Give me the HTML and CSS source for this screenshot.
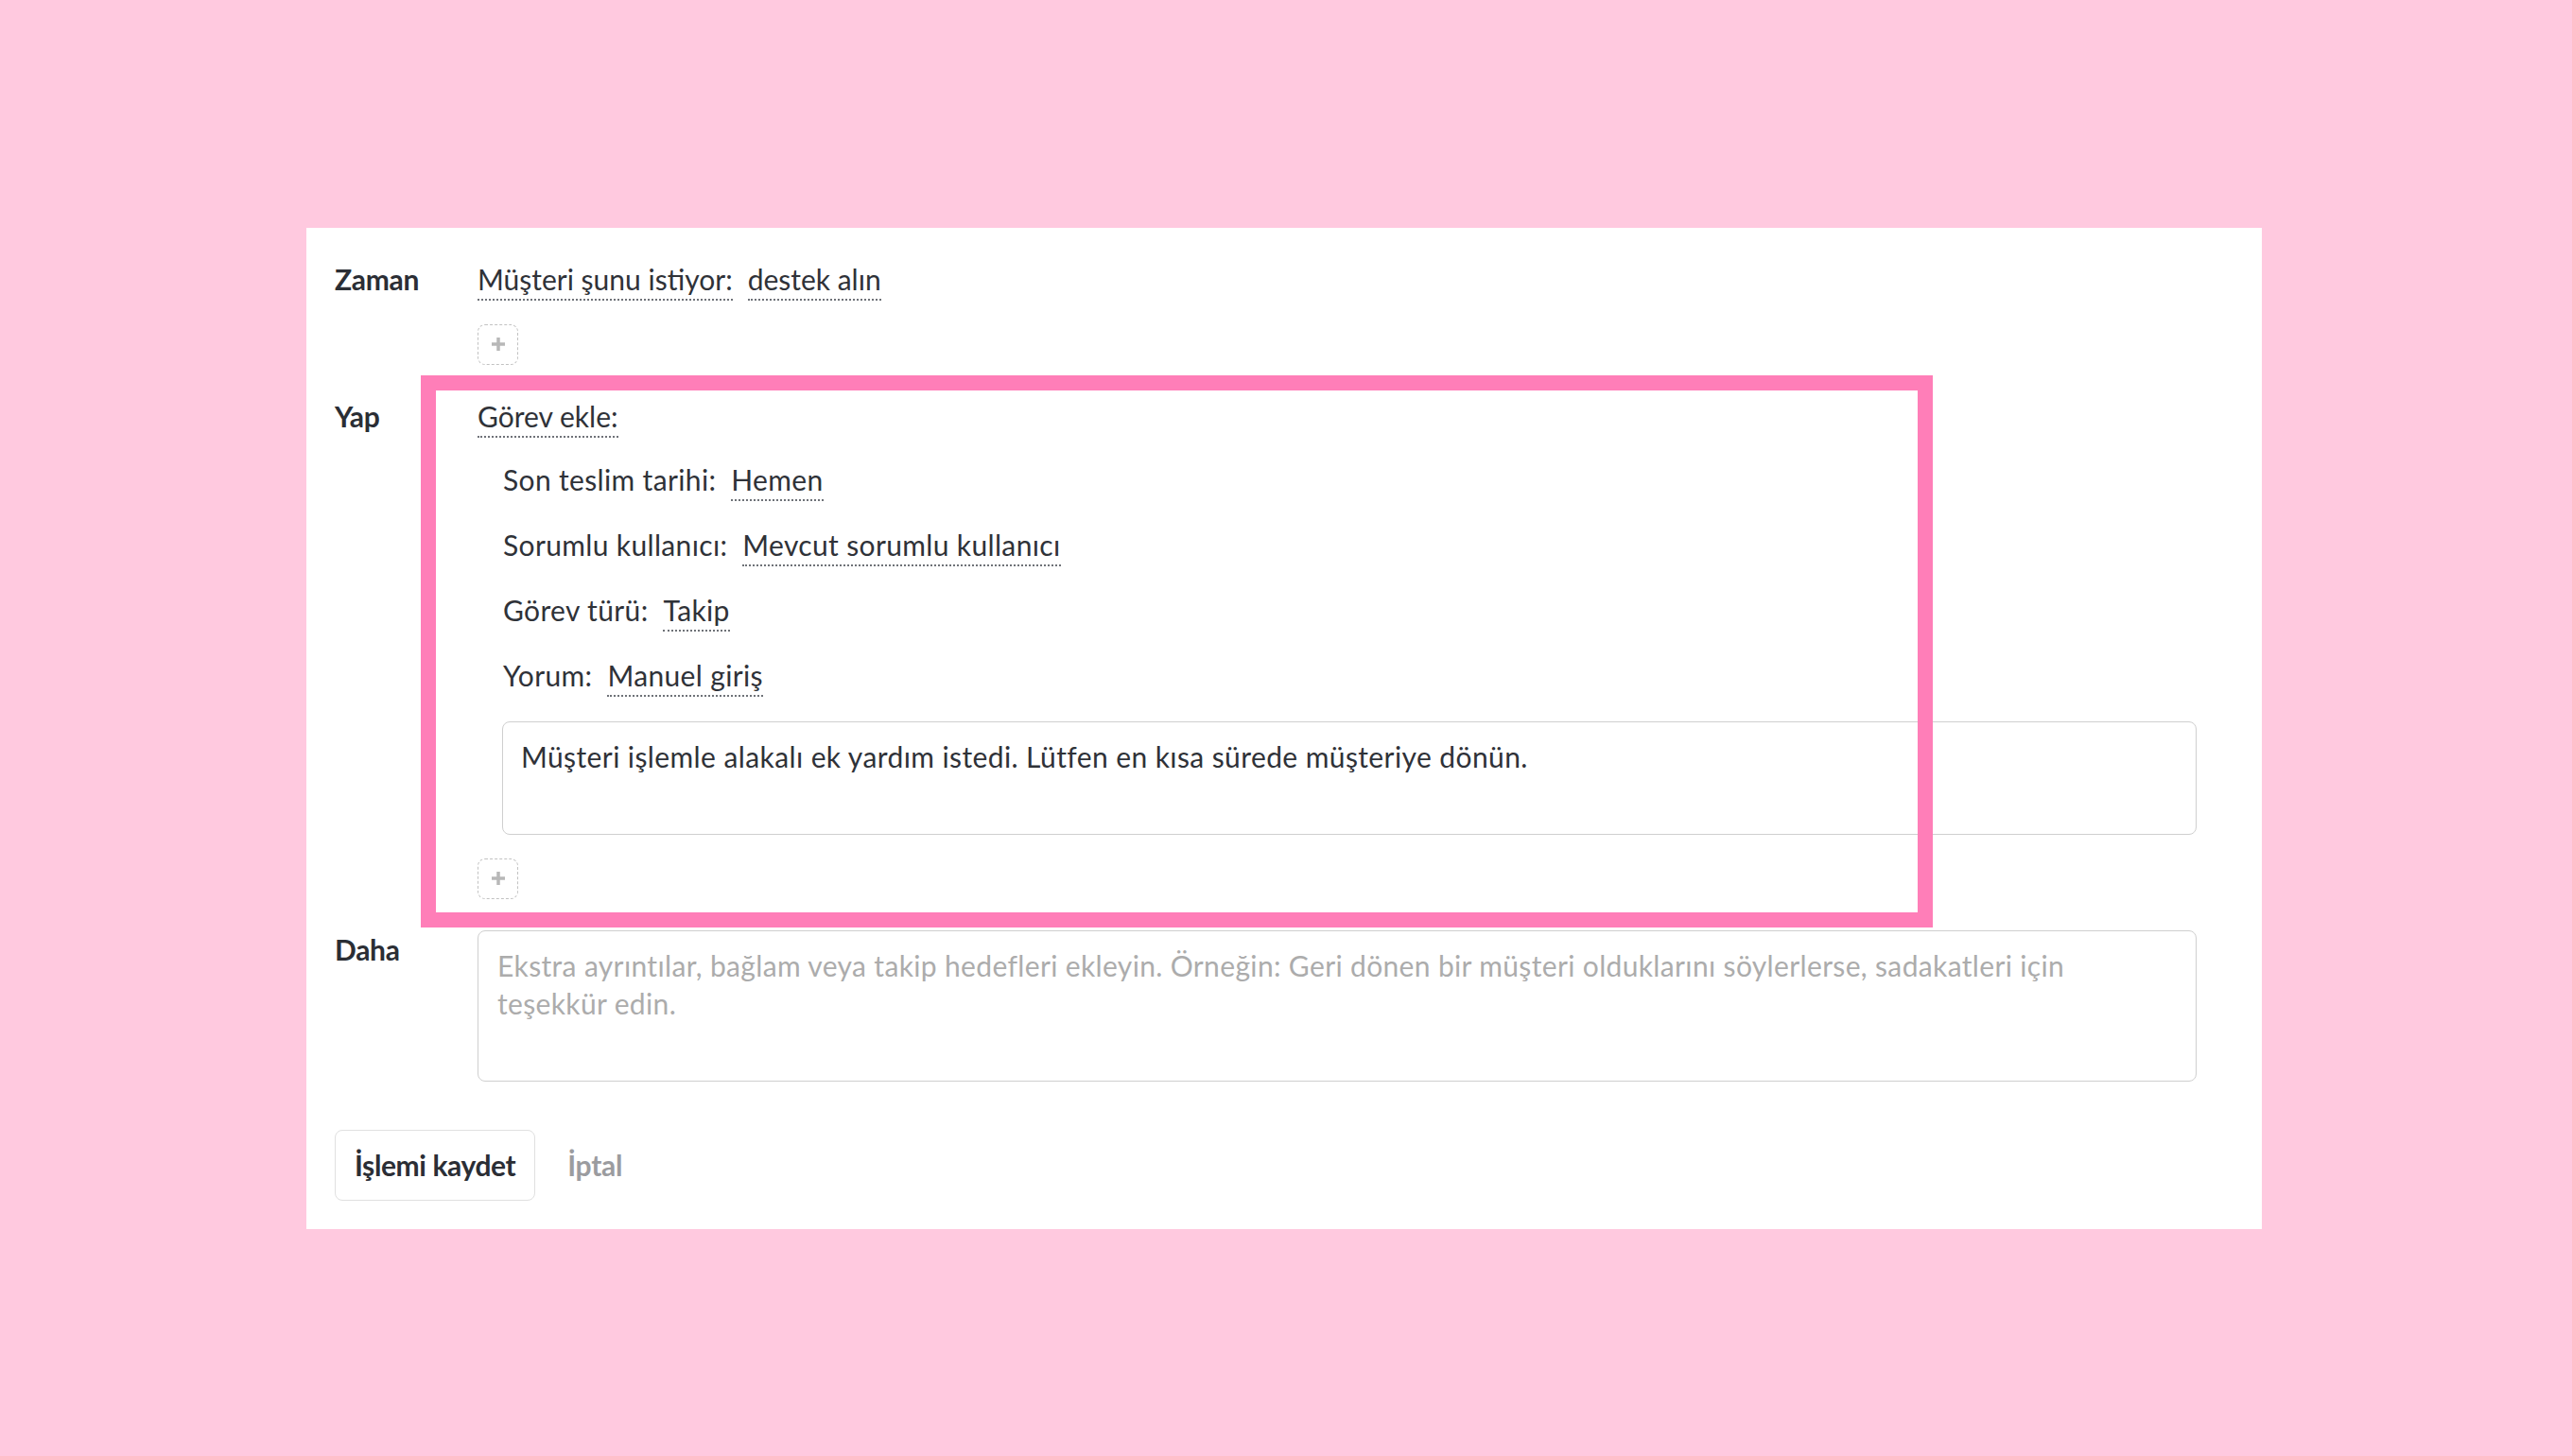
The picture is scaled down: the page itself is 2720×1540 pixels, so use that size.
FILE: index.html
```html
<!DOCTYPE html>
<html lang="tr">
<head>
<meta charset="utf-8">
<title>İşlem</title>
<link rel="stylesheet" href="styles.css">
</head>
<body>
<main class="card">
  <section class="row">
    <div class="label">Zaman</div>
    <div class="content">
      <div class="line"><span class="tok">Müşteri şunu istiyor:</span><span class="tok gap">destek alın</span></div>
      <button class="add" type="button" aria-label="Ekle"><svg viewBox="0 0 14 14" width="14" height="14"><path d="M7 0v14M0 7h14" stroke="#b8b8b8" stroke-width="3.5"/></svg></button>
    </div>
  </section>

  <section class="row row-do">
    <div class="label">Yap</div>
    <div class="content">
      <div class="line"><span class="tok">Görev ekle:</span></div>
      <div class="sub">
        <div class="line sub-line">Son teslim tarihi:<span class="tok gap">Hemen</span></div>
        <div class="line sub-line">Sorumlu kullanıcı:<span class="tok gap">Mevcut sorumlu kullanıcı</span></div>
        <div class="line sub-line">Görev türü:<span class="tok gap">Takip</span></div>
        <div class="line sub-line">Yorum:<span class="tok gap">Manuel giriş</span></div>
        <div class="field field-comment">Müşteri işlemle alakalı ek yardım istedi. Lütfen en kısa sürede müşteriye dönün.</div>
      </div>
      <button class="add add-task" type="button" aria-label="Ekle"><svg viewBox="0 0 14 14" width="14" height="14"><path d="M7 0v14M0 7h14" stroke="#b8b8b8" stroke-width="3.5"/></svg></button>
    </div>
  </section>

  <section class="row row-more">
    <div class="label">Daha</div>
    <div class="content">
      <div class="field field-more placeholder">Ekstra ayrıntılar, bağlam veya takip hedefleri ekleyin. Örneğin: Geri dönen bir müşteri olduklarını söylerlerse, sadakatleri için teşekkür edin.</div>
    </div>
  </section>

  <div class="actions">
    <button class="save" type="button">İşlemi kaydet</button>
    <button class="cancel" type="button">İptal</button>
  </div>

  <div class="highlight" aria-hidden="true"></div>
</main>
</body>
</html>
```
FILE: styles.css
```css
* { box-sizing: border-box; }

html, body { height: 100%; }

body {
  margin: 0;
  padding-right: 4px;
  background: #ffc9df;
  display: flex;
  align-items: center;
  justify-content: center;
  font-family: "Lato", "Liberation Sans", sans-serif;
  font-size: 30px;
  color: #2f3238;
}

.card {
  position: relative;
  width: 2068px;
  background: #ffffff;
  padding: 34px 69px 30px 30px;
}

.row {
  display: grid;
  grid-template-columns: 151px 1fr;
}

.row-do { margin-top: 34px; }
.row-more { margin-top: 33px; }

.label {
  font-weight: 700;
  line-height: 40px;
  color: #2b2e35;
  letter-spacing: -0.3px;
}

.content {
  display: flex;
  flex-direction: column;
  align-items: flex-start;
}

.line {
  height: 40px;
  line-height: 40px;
  white-space: nowrap;
}

.tok {
  padding-bottom: 3px;
  border-bottom: 2px dotted #6f7278;
}

.gap { margin-left: 16px; }

.sub {
  align-self: stretch;
  margin-left: 27px;
  display: flex;
  flex-direction: column;
  letter-spacing: 0.35px;
}

.sub-line { margin-top: 29px; }
.sub-line:first-child { margin-top: 27px; }

.field {
  border: 1px solid #cfcfcf;
  border-radius: 8px;
  line-height: 40px;
  background: #fff;
}

.field-comment {
  margin-top: 29px;
  margin-left: -1px;
  height: 120px;
  padding: 16px 60px 16px 19px;
  color: #2f3238;
  letter-spacing: 0.4px;
}

.field-more {
  align-self: stretch;
  height: 160px;
  padding: 16px 100px 16px 20px;
  letter-spacing: 0.35px;
}

.placeholder { color: #acacac; }

.add {
  margin-top: 28px;
  width: 43px;
  height: 43px;
  padding: 0;
  border: 1.5px dashed #c2c2c2;
  border-radius: 8px;
  background: #fff;
  display: flex;
  align-items: center;
  justify-content: center;
}

.add-task { margin-top: 25px; }

.actions {
  margin-top: 51px;
  display: flex;
  align-items: center;
  gap: 34px;
}

.save {
  height: 75px;
  padding: 0 20px;
  border: 1px solid #e0e0e0;
  border-radius: 8px;
  background: #fff;
  font-family: inherit;
  font-size: 30px;
  font-weight: 700;
  letter-spacing: -0.4px;
  color: #2b2e35;
}

.cancel {
  padding: 0;
  border: 0;
  background: none;
  font-family: inherit;
  font-size: 30px;
  font-weight: 700;
  letter-spacing: -0.3px;
  color: #9b9c9f;
}

.highlight {
  position: absolute;
  left: 121px;
  top: 156px;
  width: 1599px;
  height: 584px;
  border: 16px solid #ff7eb8;
  pointer-events: none;
}
```
